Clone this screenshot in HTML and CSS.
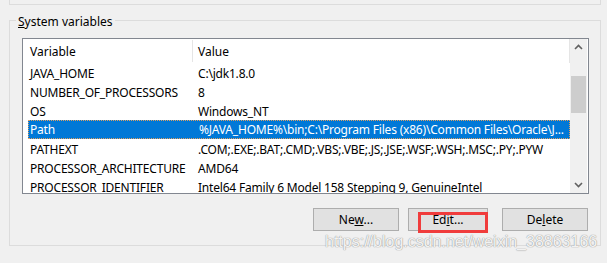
FILE: index.html
```html
<!DOCTYPE html>
<html lang="en">
<head>
    <meta charset="UTF-8">
    <title>Environment Variables</title>
    <link rel="stylesheet" href="styles.css">
</head>
<body>

    <div class="prev-box"></div>

    <fieldset class="group">
        <legend><u>S</u>ystem variables</legend>
        <div class="group-body">

            <div class="list">
                <div class="list-main">
                    <div class="list-head">
                        <div class="head-cell first">Variable</div>
                        <div class="head-cell">Value</div>
                    </div>
                    <div class="row"><span>JAVA_HOME</span><span>C:\jdk1.8.0</span></div>
                    <div class="row"><span>NUMBER_OF_PROCESSORS</span><span>8</span></div>
                    <div class="row"><span>OS</span><span>Windows_NT</span></div>
                    <div class="row selected"><span>Path</span><span>%JAVA_HOME%\bin;C:\Program Files (x86)\Common Files\Oracle\J...</span></div>
                    <div class="row"><span>PATHEXT</span><span>.COM;.EXE;.BAT;.CMD;.VBS;.VBE;.JS;.JSE;.WSF;.WSH;.MSC;.PY;.PYW</span></div>
                    <div class="row"><span>PROCESSOR_ARCHITECTURE</span><span>AMD64</span></div>
                    <div class="row"><span>PROCESSOR_IDENTIFIER</span><span>Intel64 Family 6 Model 158 Stepping 9, GenuineIntel</span></div>
                </div>
                <div class="scrollbar">
                    <svg class="arrow" width="17" height="17" viewBox="0 0 17 17"><polyline points="5,10 8.5,6.5 12,10" fill="none" stroke="#606060" stroke-width="1.6"/></svg>
                    <div class="track"><div class="thumb"></div></div>
                    <svg class="arrow" width="17" height="17" viewBox="0 0 17 17"><polyline points="5,7 8.5,10.5 12,7" fill="none" stroke="#606060" stroke-width="1.6"/></svg>
                </div>
            </div>

            <div class="buttons">
                <button type="button" class="btn">Ne<u>w</u>...</button>
                <button type="button" class="btn btn-edit">Ed<u>i</u>t...<span class="mark"></span></button>
                <button type="button" class="btn btn-delete">De<u>l</u>ete</button>
            </div>

        </div>
    </fieldset>

    <div class="watermark">https://blog.csdn.net/weixin_38863166</div>

</body>
</html>
```

FILE: styles.css
```css
body {
    margin: 0;
    padding: 0 0 0 9px;
    width: 592px;
    height: 263px;
    background-color: #f0f0f0;
    font-family: 'Noto Sans', 'Open Sans', sans-serif;
    font-size: 12px;
    color: #000;
    overflow: hidden;
}
.prev-box {
    height: 4px;
    border: 1px solid #dcdcdc;
    border-top: none;
}
.group {
    margin: 5px 0 0 0;
    padding: 0;
    border: 1px solid #dcdcdc;
    min-width: 0;
}
.group legend {
    margin-left: 6px;
    padding: 4px 2px 0;
    line-height: 16px;
}
.group-body {
    padding: 8px 11px 14px 12px;
}
.list {
    display: flex;
    height: 154px;
    border: 1px solid #828790;
    background: #fff;
    overflow: hidden;
}
.list-main {
    flex: 1;
    min-width: 0;
    padding-left: 5px;
}
.list-head {
    display: flex;
    height: 24px;
    align-items: center;
    border-right: 1px solid #e5e5e5;
}
.head-cell {
    padding: 2px 0 0 5px;
    height: 20px;
    line-height: 20px;
}
.head-cell.first {
    width: 162px;
    padding-left: 2px;
    border-right: 1px solid #e5e5e5;
}
.row {
    display: grid;
    grid-template-columns: 168px 1fr;
    height: 19px;
    line-height: 17px;
    white-space: nowrap;
    letter-spacing: -0.2px;
    box-sizing: border-box;
}
.row span {
    padding: 2px 0 0 2px;
    overflow: hidden;
}
.row.selected {
    background-color: #0078d7;
    color: #fff;
    border: 1px dotted #e0a060;
    line-height: 16px;
}
.row.selected span {
    padding-top: 1px;
}
.row.selected span:first-child {
    padding-left: 1px;
}
.scrollbar {
    width: 17px;
    margin-right: 1px;
    background-color: #f0f0f0;
    display: flex;
    flex-direction: column;
}
.arrow {
    display: block;
    flex: none;
}
.track {
    flex: 1;
    padding-top: 20px;
}
.thumb {
    height: 37px;
    margin: 0 1px;
    background-color: #cdcdcd;
}
.buttons {
    display: flex;
    justify-content: flex-end;
    margin-top: 14px;
    padding-right: 1px;
}
.btn {
    width: 86px;
    height: 23px;
    margin-left: 9px;
    padding: 0;
    background-color: #e1e1e1;
    border: 1px solid #adadad;
    font-family: inherit;
    font-size: 12px;
    color: #000;
}
.btn-edit {
    position: relative;
    width: 80px;
}
.btn-delete {
    margin-left: 14px;
}
.mark {
    position: absolute;
    left: 9px;
    top: 3px;
    width: 64px;
    height: 15px;
    border: 3px solid #f03c3c;
}
.watermark {
    position: absolute;
    left: 325px;
    top: 233px;
    font-family: 'Liberation Sans', Arial, sans-serif;
    font-size: 16px;
    color: rgba(255, 255, 255, 0.9);
    text-shadow: 0 0 1px #999, 0 0 1px #999;
    white-space: nowrap;
}
```
